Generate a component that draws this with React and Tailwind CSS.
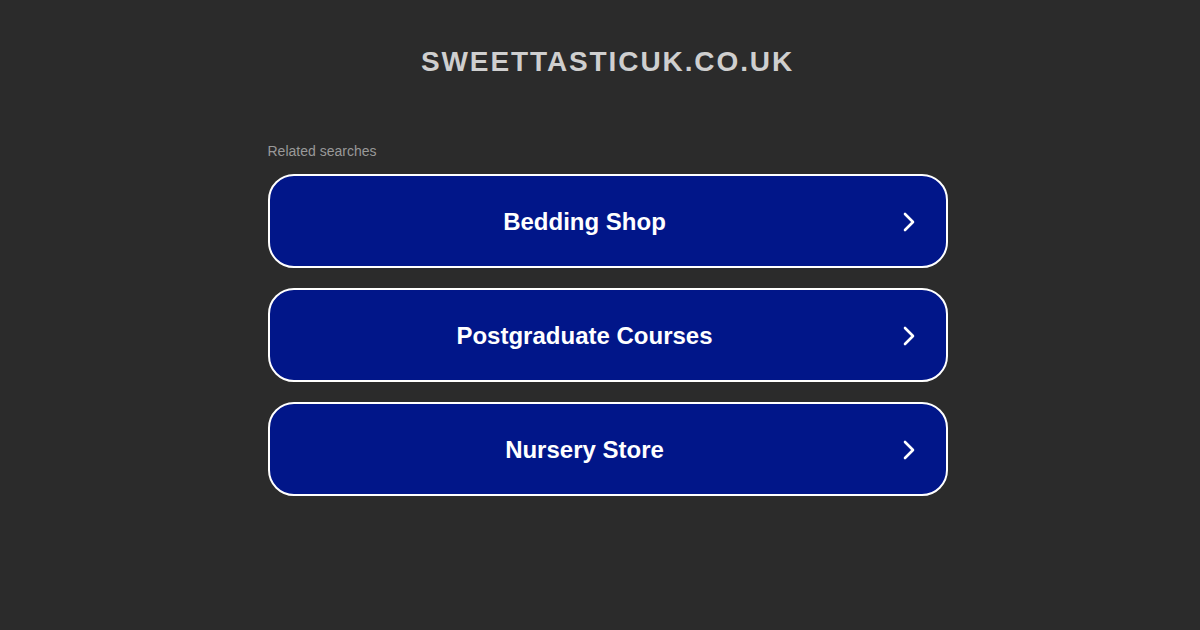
export default function App() {
  const items = ["Bedding Shop", "Postgraduate Courses", "Nursery Store"];
  return (
    <div className="w-[1200px] h-[630px] bg-[#2b2b2b] flex flex-col items-center pl-[15px]" style={{ fontFamily: '"Liberation Sans", Arial, sans-serif' }}>
      <h1 className="mt-[45px] text-[28px] leading-[34px] font-bold tracking-[1.9px] text-[#cfcfcf]">SWEETTASTICUK.CO.UK</h1>
      <div className="mt-[64px] w-[680px] flex flex-col">
        <div className="text-[14px] leading-[16px] text-[#999999] mb-[15px]">Related searches</div>
        <div className="flex flex-col gap-[20px]">
          {items.map((t) => (
            <div key={t} className="h-[94px] rounded-[26px] border-2 border-white bg-[#011689] flex items-center pt-[2px]">
              <div className="flex-1 text-center text-white font-bold text-[24px] leading-[28px] pl-[46px]">{t}</div>
              <div className="w-[92px] flex justify-center pl-[18px]">
                <svg width="14" height="22" viewBox="0 0 14 22" fill="none">
                  <path d="M3 3 L11 11 L3 19" stroke="white" strokeWidth="2.6" strokeLinecap="round" strokeLinejoin="round" />
                </svg>
              </div>
            </div>
          ))}
        </div>
      </div>
    </div>
  );
}
